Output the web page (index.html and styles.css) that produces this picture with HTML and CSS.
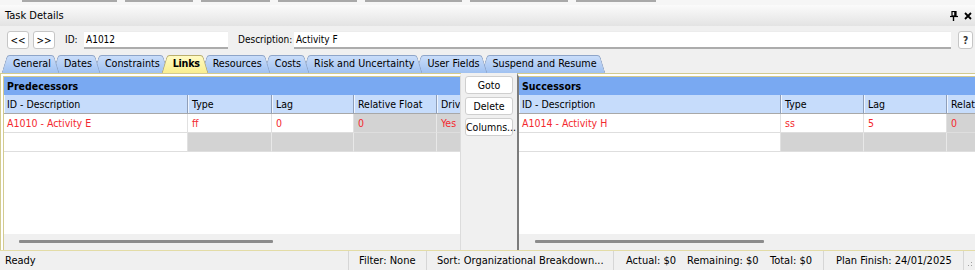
FILE: index.html
```html
<!DOCTYPE html>
<html lang="en">
  <head>
    <meta charset="UTF-8" />
    <title>Task Details</title>
    <link rel="stylesheet" href="styles.css">
  </head>
  <body>
    <div class="window">
      <div class="topstrip">
        <span></span><span></span><span></span><span></span><span></span><span></span><span></span>
      </div>

      <div class="titlebar">
        <span class="title">Task Details</span>
        <span class="wincontrols">
          <svg width="8" height="10" viewBox="0 0 8 10">
            <rect x="2" y="0.5" width="4" height="4.5" fill="none" stroke="#000" stroke-width="1.2" />
            <rect x="4.2" y="0.5" width="1.8" height="4.5" fill="#000" />
            <line x1="0" y1="5.5" x2="8" y2="5.5" stroke="#000" stroke-width="1.2" />
            <line x1="3.5" y1="5.5" x2="3.5" y2="10" stroke="#000" stroke-width="1.4" />
          </svg>
          <svg width="8" height="8" viewBox="0 0 8 8">
            <path d="M1 1 L7 7 M7 1 L1 7" stroke="#000" stroke-width="1.8" />
          </svg>
        </span>
      </div>

      <div class="idrow">
        <button class="navbtn">&lt;&lt;</button>
        <button class="navbtn next">&gt;&gt;</button>
        <span class="lbl id-lbl">ID:</span>
        <div class="field id-field">A1012</div>
        <span class="lbl desc-lbl">Description:</span>
        <div class="field desc-field">Activity F</div>
        <button class="navbtn help">?</button>
      </div>

      <div class="tabs">
        <span class="tab">General</span>
        <span class="tab">Dates</span>
        <span class="tab">Constraints</span>
        <span class="tab active">Links</span>
        <span class="tab">Resources</span>
        <span class="tab">Costs</span>
        <span class="tab">Risk and Uncertainty</span>
        <span class="tab">User Fields</span>
        <span class="tab">Suspend and Resume</span>
      </div>

      <div class="content">
        <div class="pane pane-left">
          <div class="pane-head">Predecessors</div>
          <div class="row colhead">
            <div class="cell c-id">ID - Description</div>
            <div class="cell c-type">Type</div>
            <div class="cell c-lag">Lag</div>
            <div class="cell c-float">Relative Float</div>
            <div class="cell c-driv">Driving</div>
          </div>
          <div class="row red">
            <div class="cell c-id">A1010 - Activity E</div>
            <div class="cell c-type">ff</div>
            <div class="cell c-lag">0</div>
            <div class="cell c-float grey">0</div>
            <div class="cell c-driv grey">Yes</div>
          </div>
          <div class="row">
            <div class="cell c-id"></div>
            <div class="cell c-type grey"></div>
            <div class="cell c-lag grey"></div>
            <div class="cell c-float grey"></div>
            <div class="cell c-driv grey"></div>
          </div>
          <div class="grid-fill"></div>
          <div class="hscroll"><span class="thumb thumb-left"></span></div>
        </div>

        <div class="actions">
          <button class="actbtn">Goto</button>
          <button class="actbtn">Delete</button>
          <button class="actbtn">Columns...</button>
        </div>

        <div class="pane pane-right">
          <div class="pane-head">Successors</div>
          <div class="row colhead">
            <div class="cell s-id">ID - Description</div>
            <div class="cell s-type">Type</div>
            <div class="cell s-lag">Lag</div>
            <div class="cell s-float">Relative Float</div>
          </div>
          <div class="row red">
            <div class="cell s-id">A1014 - Activity H</div>
            <div class="cell s-type">ss</div>
            <div class="cell s-lag">5</div>
            <div class="cell s-float grey">0</div>
          </div>
          <div class="row">
            <div class="cell s-id"></div>
            <div class="cell s-type grey"></div>
            <div class="cell s-lag grey"></div>
            <div class="cell s-float grey"></div>
          </div>
          <div class="grid-fill"></div>
          <div class="hscroll"><span class="thumb thumb-right"></span></div>
        </div>
      </div>

      <div class="status">
        <div class="st st-ready">Ready</div>
        <div class="st st-filter">Filter: None</div>
        <div class="st st-sort">Sort: Organizational Breakdown...</div>
        <div class="st st-money">
          <span class="m-actual">Actual: $0</span><span class="m-remain">Remaining: $0</span><span>Total: $0</span>
        </div>
        <div class="st st-finish">Plan Finish: 24/01/2025</div>
        <div class="st-grip">
          <svg width="8" height="8" viewBox="0 0 8 8">
            <rect x="6" y="2" width="1" height="1" fill="#a0a0a0" />
            <rect x="3" y="5" width="1" height="1" fill="#a0a0a0" />
            <rect x="6" y="5" width="1" height="1" fill="#a0a0a0" />
          </svg>
        </div>
      </div>
    </div>
  </body>
</html>
```

FILE: styles.css
```css
body {
  margin: 0;
  background-color: #f0f0f0;
  font-family: "DejaVu Sans Condensed", "Liberation Sans", sans-serif;
  font-size: 10.5px;
  color: #000;
  overflow: hidden;
}

.window {
  display: flex;
  flex-direction: column;
  width: 975px;
  height: 270px;
}

/* remains of the grid above the docked window */
.topstrip {
  height: 5px;
  display: flex;
  gap: 8px;
  padding-left: 22px;
  background-color: #f6f6f6;
  flex-shrink: 0;
}

.topstrip span {
  height: 2px;
  background-color: #a9a9a9;
}

.topstrip span:nth-child(1) { width: 95px; }
.topstrip span:nth-child(2) { width: 68px; }
.topstrip span:nth-child(3) { width: 69px; }
.topstrip span:nth-child(4) { width: 79px; }
.topstrip span:nth-child(5) { width: 97px; }
.topstrip span:nth-child(6) { width: 98px; }
.topstrip span:nth-child(7) { width: 80px; }

.titlebar {
  height: 21px;
  display: flex;
  align-items: center;
  justify-content: space-between;
  padding: 0 3px 0 5px;
  background: linear-gradient(#fbfbfb, #e3e3e3);
  font-size: 11px;
  flex-shrink: 0;
}

.wincontrols {
  display: flex;
  align-items: center;
  gap: 6px;
}

.idrow {
  height: 27px;
  display: flex;
  align-items: flex-start;
  padding: 5px 2px 0 7px;
  box-sizing: border-box;
  font-size: 10px;
  flex-shrink: 0;
}

.navbtn {
  width: 22px;
  height: 18px;
  padding: 0;
  border: 1px solid #c6c6c6;
  border-radius: 3px;
  background-color: #fff;
  font-family: inherit;
  font-size: 10px;
  color: #000;
}

.navbtn.next {
  margin-left: 4px;
}

.navbtn.help {
  width: 15px;
  margin-left: 7px;
  font-weight: bold;
  color: #333;
}

.lbl {
  line-height: 18px;
  margin-left: 10px;
}

.id-lbl {
  width: 19px;
}

.desc-lbl {
  width: 56px;
}

.field {
  height: 18px;
  box-sizing: border-box;
  padding-left: 2px;
  line-height: 16px;
  background-color: #fff;
  border-top: 1px solid #ececec;
  border-bottom: 2px solid #acacac;
}

.id-field {
  width: 144px;
}

.desc-field {
  flex: 1;
}

/* tab strip */
.tabs {
  height: 20px;
  display: flex;
  padding: 2px 0 0 7px;
  box-sizing: border-box;
  font-size: 10.7px;
  flex-shrink: 0;
}

.tab {
  position: relative;
  height: 18px;
  line-height: 18px;
  padding: 0 3px 0 6px;
  margin-right: 4px;
  white-space: nowrap;
}

.tab::before,
.tab::after {
  content: "";
  position: absolute;
  top: 0;
  bottom: 0;
  z-index: -1;
  background: linear-gradient(#c9ddfa, #a0c1f1);
  border-top: 1px solid #8ea5c9;
  transform-origin: top;
}

.tab::before {
  left: 0;
  right: 6px;
  border-left: 1px solid #8ea5c9;
  border-top-left-radius: 3px;
  transform: skewX(-17deg);
}

.tab::after {
  left: 6px;
  right: 0;
  border-right: 1px solid #8ea5c9;
  border-top-right-radius: 3px;
  transform: skewX(17deg);
}

.tab:nth-child(1) { z-index: 9; }
.tab:nth-child(2) { z-index: 8; }
.tab:nth-child(3) { z-index: 7; }
.tab:nth-child(4) { z-index: 6; }
.tab:nth-child(5) { z-index: 5; }
.tab:nth-child(6) { z-index: 4; }
.tab:nth-child(7) { z-index: 3; }
.tab:nth-child(8) { z-index: 2; }
.tab:nth-child(9) { z-index: 1; }

.tab.active {
  z-index: 20;
  font-weight: bold;
  letter-spacing: -0.3px;
}

.tab.active::before,
.tab.active::after {
  background: linear-gradient(#fffbc4, #f9ee90);
  border-color: #b9ae6e;
}

/* links panes */
.content {
  flex: 1;
  display: flex;
  min-height: 0;
}

.pane {
  display: flex;
  flex-direction: column;
  background-color: #fff;
  overflow: hidden;
  box-sizing: border-box;
  border-top: 4px double #d3cb8f;
}

.pane-left {
  width: 461px;
  border-left: 4px double #d3cb8f;
  border-right: 1px solid #dcdcdc;
}

.pane-right {
  flex: 1;
  border-left: 2px solid #7c7c7c;
}

.pane-head {
  height: 18px;
  line-height: 18px;
  padding-left: 3px;
  background-color: #79a9f2;
  font-weight: bold;
  flex-shrink: 0;
}

.row {
  display: flex;
  height: 19px;
  flex-shrink: 0;
}

.cell {
  flex-shrink: 0;
  box-sizing: border-box;
  padding-left: 4px;
  line-height: 18px;
  white-space: nowrap;
  overflow: hidden;
  border-right: 1px solid #e1e1e1;
  border-bottom: 1px solid #dedede;
}

.colhead .cell {
  background-color: #c6dcfb;
  border-right: 1px solid #8f9fb9;
  border-bottom: 1px solid #a8a8a8;
  box-shadow: inset 1px 0 #eef5ff;
  color: #000;
}

.cell.grey {
  background-color: #d3d3d3;
  border-right-color: #e8e8e8;
}

.red {
  color: #f3292e;
}

.c-id { width: 184px; padding-left: 3px; }
.c-type { width: 84px; }
.c-lag { width: 82px; }
.c-float { width: 83px; }
.c-driv { width: 60px; }

.s-id { width: 262px; padding-left: 3px; }
.s-type { width: 83px; }
.s-lag { width: 83px; }
.s-float { width: 90px; }

.grid-fill {
  flex: 1;
}

.hscroll {
  height: 16px;
  background-color: #f0f0f0;
  flex-shrink: 0;
}

.thumb {
  display: block;
  height: 3px;
  margin-top: 6px;
  border-radius: 1px;
  background-color: #8c8c8c;
}

.thumb-left {
  width: 254px;
  margin-left: 15px;
}

.thumb-right {
  width: 229px;
  margin-left: 16px;
}

.actions {
  width: 56px;
  display: flex;
  flex-direction: column;
  gap: 3px;
  padding: 3px 0 0 4px;
  box-sizing: border-box;
  flex-shrink: 0;
}

.actbtn {
  width: 48px;
  height: 18px;
  padding: 0;
  border: 1px solid #cfcfcf;
  border-radius: 3px;
  background-color: #fff;
  font-family: inherit;
  font-size: 10.5px;
  color: #000;
}

/* status bar */
.status {
  height: 20px;
  display: flex;
  box-sizing: border-box;
  border-top: 1px solid #e3dca6;
  font-size: 11px;
  line-height: 19px;
  white-space: nowrap;
  flex-shrink: 0;
}

.st {
  box-sizing: border-box;
  border-right: 1px solid #d6d6d6;
  overflow: hidden;
}

.st-ready { width: 349px; padding-left: 5px; }
.st-filter { width: 78px; padding-left: 10px; }
.st-sort { width: 187px; padding-left: 10px; }
.st-money { width: 210px; padding-left: 12px; display: flex; }
.st-finish { width: 140px; padding-left: 12px; }

.m-actual { width: 61px; }
.m-remain { width: 83px; }

.st-grip {
  flex: 1;
  display: flex;
  align-items: flex-end;
  justify-content: flex-end;
  padding: 0 2px 2px 0;
}
```
